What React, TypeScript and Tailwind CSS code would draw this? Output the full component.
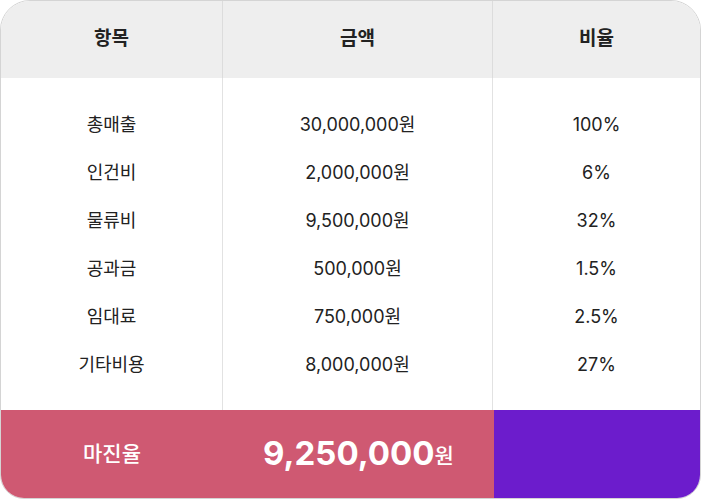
import React from 'react';

const rows = [
  { name: '총매출', amount: '30,000,000원', ratio: '100%' },
  { name: '인건비', amount: '2,000,000원', ratio: '6%' },
  { name: '물류비', amount: '9,500,000원', ratio: '32%' },
  { name: '공과금', amount: '500,000원', ratio: '1.5%' },
  { name: '임대료', amount: '750,000원', ratio: '2.5%' },
  { name: '기타비용', amount: '8,000,000원', ratio: '27%' },
];

const font = { fontFamily: "Inter, 'Noto Sans CJK KR', sans-serif" };

export default function App(): JSX.Element {
  return (
    <div className="w-[701px] h-[499px] bg-white" style={font}>
      <div className="h-full flex flex-col border border-[#d4d4d4] rounded-t-[30px] rounded-b-[24px] overflow-hidden text-[#222]">
        {/* header */}
        <div className="grid grid-cols-[222px_270px_1fr] h-[77px] bg-[#eeeeee] text-[19px] font-semibold">
          <div className="flex items-center justify-center border-r border-[#dcdcdc]">항목</div>
          <div className="flex items-center justify-center border-r border-[#dcdcdc]">금액</div>
          <div className="flex items-center justify-center">비율</div>
        </div>

        {/* body */}
        <div className="grid grid-cols-[222px_270px_1fr] h-[332px] text-[18px]">
          <div className="flex flex-col pt-[22px] border-r border-[#e2e2e2]">
            {rows.map((r) => (
              <div key={r.name} className="h-[48px] flex items-center justify-center">{r.name}</div>
            ))}
          </div>
          <div className="flex flex-col pt-[22px] border-r border-[#e2e2e2]">
            {rows.map((r) => (
              <div key={r.name} className="h-[48px] flex items-center justify-center">{r.amount}</div>
            ))}
          </div>
          <div className="flex flex-col pt-[22px]">
            {rows.map((r) => (
              <div key={r.name} className="h-[48px] flex items-center justify-center">{r.ratio}</div>
            ))}
          </div>
        </div>

        {/* footer */}
        <div className="grid grid-cols-[222px_271px_1fr] flex-1 text-white">
          <div className="flex items-center justify-center bg-[#cf5972] text-[21px] font-medium">마진율</div>
          <div className="flex items-center justify-center bg-[#cf5972]">
            <span className="text-[33px] font-bold">9,250,000</span>
            <span className="text-[21px] font-medium mt-[4px]">원</span>
          </div>
          <div className="bg-[#6c1ccc]" />
        </div>
      </div>
    </div>
  );
}
